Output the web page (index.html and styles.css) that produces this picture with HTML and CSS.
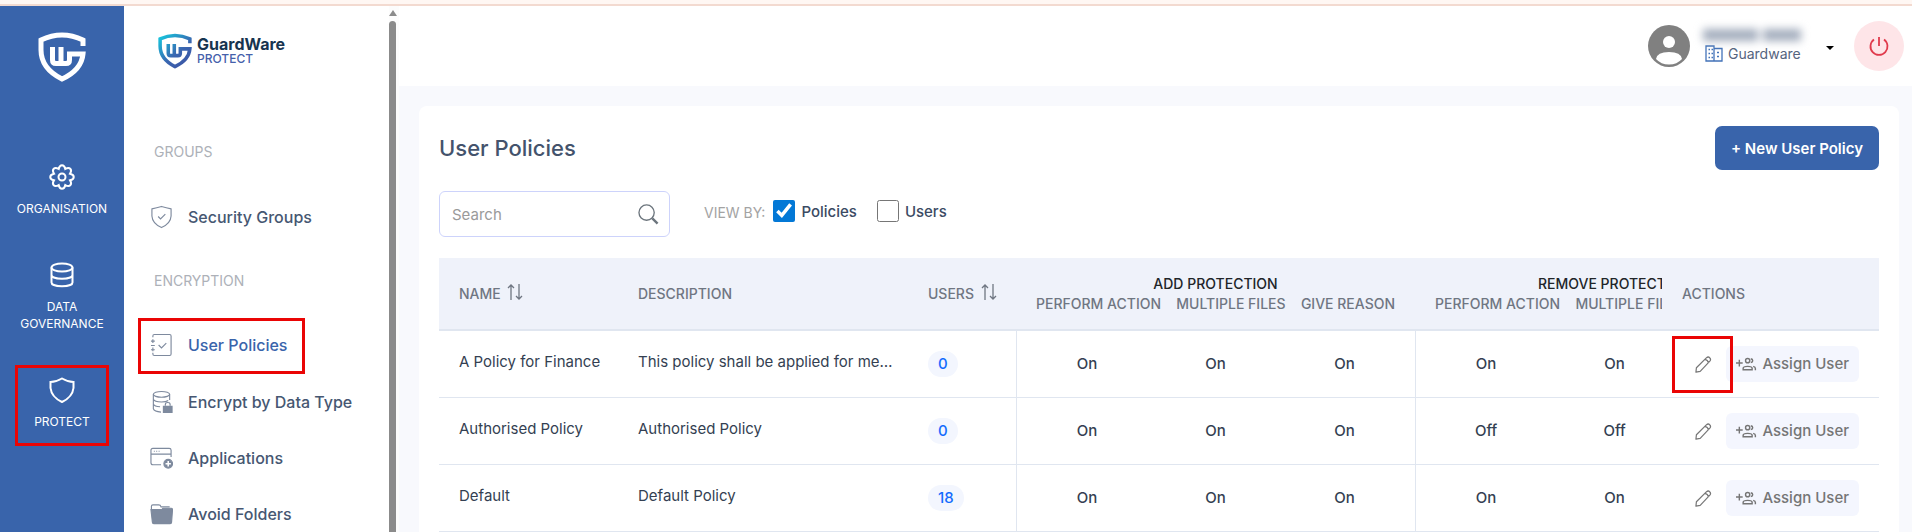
FILE: index.html
```html
<!DOCTYPE html>
<html lang="en">
<head>
    <meta charset="utf-8">
    <title>User Policies - GuardWare Protect</title>
    <link rel="stylesheet" href="styles.css">
</head>
<body>
    <!-- Shared icons -->
    <svg class="icon-defs" aria-hidden="true">
        <linearGradient id="logoFill" gradientUnits="userSpaceOnUse" x1="4" y1="4" x2="40" y2="46">
            <stop offset="0" stop-color="#17c3dc" />
            <stop offset="0.6" stop-color="#3a66b0" />
            <stop offset="1" stop-color="#3b55a5" />
        </linearGradient>
        <symbol id="logo" viewBox="0 0 48 50">
            <path d="M45 14V8Q24-2 3 8v10c0 14 9 23 21 29 13-6 20-14 21-25H31.500V28q0 3.500-3.500 3.500H18q-3.500 0-3.500-3.500V15M23 15v16" fill="none" stroke-width="5" />
        </symbol>
        <symbol id="sort" viewBox="0 0 16 18">
            <path d="M4 17V2M1 5l3-3 3 3M12 1v15M9 13l3 3 3-3" fill="none" stroke="currentColor" stroke-width="1.3" />
        </symbol>
        <symbol id="pencil" viewBox="0 0 18 18">
            <path d="M1 17l.5-4.500L12 2q2-1.800 3.500-.2 1.800 1.700.2 3.700L5.500 16.200zM10.500 3.500L14.500 7.500M12 9l-8 8" fill="none" stroke="none" />
            <path d="M1 17l.5-4.500L12 2q2-1.800 3.500-.2 1.800 1.700.2 3.700L5.500 16.200zM10.500 3.500q3 .5 3.800 3.800" fill="none" stroke="currentColor" stroke-width="1.300" stroke-linejoin="round" />
        </symbol>
        <symbol id="assign" viewBox="0 0 22 14">
            <path d="M0 6h7M3.500 2.500v7M7.500 13v-1.500q0-2 4.700-2t4.700 2V13zM15.500 1.500q2 .3 2 2t-2 2M18 9.500q2.300.6 2.300 2.300V13.500" fill="none" stroke="currentColor" stroke-width="1.500" />
            <circle cx="12.200" cy="3.500" r="2.200" fill="none" stroke="currentColor" stroke-width="1.500" />
        </symbol>
    </svg>

    <div class="top-strip"></div>

    <div class="app">
        <!-- Main modules -->
        <nav class="rail" aria-label="Modules">
            <svg class="rail-logo"><use href="#logo" /></svg>
            <a href="#" class="rail-item">
                <svg viewBox="-13 -13 26 26" class="rail-icon">
                    <path d="M-3.300-8C-2.200-13 2.200-13 3.300-8C7.600-10.700 10.700-7.600 8-3.300C13-2.200 13 2.200 8 3.300C10.700 7.600 7.600 10.700 3.300 8C2.200 13-2.200 13-3.300 8C-7.600 10.700-10.700 7.600-8 3.300C-13 2.200-13-2.200-8-3.300C-10.700-7.600-7.600-10.700-3.300-8z" />
                    <circle r="3.500" />
                </svg>
                ORGANISATION
            </a>
            <a href="#" class="rail-item">
                <svg viewBox="0 0 26 26" class="rail-icon">
                    <ellipse cx="13" cy="5.500" rx="10.500" ry="4" />
                    <path d="M2.500 5.500v15c0 5 21 5 21 0v-15M2.500 13c0 5 21 5 21 0" />
                </svg>
                DATA GOVERNANCE
            </a>
            <a href="#" class="rail-item rail-item-active">
                <svg viewBox="0 0 26 26" class="rail-icon">
                    <path d="M13 1.500Q19 5 24.500 5v6q-1 9-11.500 14Q2.500 20 1.500 11V5Q7 5 13 1.500z" />
                </svg>
                PROTECT
            </a>
        </nav>

        <!-- Protect menu -->
        <div class="menu">
            <a href="#" class="brand">
                <svg class="brand-mark"><use href="#logo" /></svg>
                <span class="brand-text">
                    <span class="brand-name">GuardWare</span>
                    <span class="brand-product">PROTECT</span>
                </span>
            </a>
            <h2 class="menu-title">GROUPS</h2>
            <a href="#" class="menu-item">
                <svg class="menu-icon" viewBox="0 0 24 24">
                    <path d="M12 1q5 1.500 10 2.500v7.500q-.5 8-10 12-9.500-4-10-12V3.500Q7 2.500 12 1zM8.500 11.500l2.500 2.500 5-5" />
                </svg>
                Security Groups
            </a>
            <h2 class="menu-title">ENCRYPTION</h2>
            <a href="#" class="menu-item menu-item-active">
                <svg class="menu-icon" viewBox="0 0 24 24">
                    <path d="M3 4V2.500Q3 1 4.500 1h16Q22 1 22 2.500v19q0 1.500-1.500 1.500h-16Q3 23 3 21.500V20M1 8h4M1 12.500h4M1 17h4M3 6v4M3 14.500v4M9 12l3 3 5-5" />
                </svg>
                User Policies
            </a>
            <a href="#" class="menu-item">
                <svg class="menu-icon" viewBox="0 0 24 24">
                    <ellipse cx="12" cy="4" rx="8.500" ry="3" />
                    <path d="M3.500 4v15q1 3 8 3.500M20.500 4v6M3.500 9q1 3 8.500 3 5 0 7-1.500M3.500 14q1 2.500 7 3" />
                    <path class="fill" d="M14 16.500h9V23h-9z" />
                    <path d="M16 16v-1.500q0-2 2.500-2t2.500 2V16" />
                </svg>
                Encrypt by Data Type
            </a>
            <a href="#" class="menu-item">
                <svg class="menu-icon" viewBox="0 0 24 24">
                    <path d="M11.500 19H3q-2 0-2-2V4q0-2 2-2h17q2 0 2 2v7M1 8h21M4 5h1M6.500 5h1M9 5h1" />
                    <circle class="fill" cx="19" cy="18" r="4.500" />
                    <path class="cut" d="M19 15.200v5.600M16.200 18h5.600" />
                </svg>
                Applications
            </a>
            <a href="#" class="menu-item">
                <svg class="menu-icon" viewBox="0 0 24 24">
                    <path class="fill" d="M1 7.500h10q1.500 0 2.500-1.500h8.500q1.500 0 1.500 1.500l-1 13q0 1.500-1.500 1.500h-17q-1.500 0-1.500-1.500z" />
                    <path d="M1.500 7V4q0-1.500 1.500-1.500h6q2 0 2.500 2h9" />
                </svg>
                Avoid Folders
            </a>
        </div>
        <div class="scrollbar"><div class="scroll-arrow"></div><div class="scroll-thumb"></div></div>

        <div class="content">
            <header class="header">
                <button type="button" class="account" aria-label="Account menu">
                    <svg class="avatar" viewBox="0 0 42 42">
                        <circle cx="21" cy="21" r="21" fill="#808080" />
                        <circle cx="21" cy="17" r="6" fill="#fff" />
                        <path d="M8 34q1-7 13-7t13 7q-5 5.500-13 5.500T8 34z" fill="#fff" />
                    </svg>
                    <span class="account-text">
                        <span class="account-name"><i></i><i></i></span>
                        <span class="account-org">
                            <svg class="org-icon" viewBox="0 0 18 17">
                                <path d="M1 1h8v15H1zM9 3.500h8V16H9zM3.500 4.500H5M3.500 8.500H5M3.500 12.500H5M6.500 4.500H8M6.500 8.500H8M6.500 12.500H8M12 7.500h2M12 11.500h2" />
                            </svg>
                            Guardware
                        </span>
                    </span>
                    <span class="caret"></span>
                </button>
                <button type="button" class="power" aria-label="Log out">
                    <svg viewBox="0 0 20 20">
                        <path d="M10 1v9M5 3.500a8.500 8.500 0 1 0 10 0" />
                    </svg>
                </button>
            </header>

            <main class="card">
                <div class="card-top">
                    <h1>User Policies</h1>
                    <button type="button" class="new-button">+ New User Policy</button>
                </div>

                <div class="filters">
                    <div class="search">
                        <input type="text" placeholder="Search" aria-label="Search">
                        <svg viewBox="0 0 22 22">
                            <circle cx="9" cy="9" r="8" />
                            <path d="M15 15l5.500 5.500" stroke-width="2.500" />
                        </svg>
                    </div>
                    <span class="view-by">VIEW BY:</span>
                    <label class="check"><input type="checkbox" checked> Policies</label>
                    <label class="check"><input type="checkbox"> Users</label>
                </div>

                <div class="table-wrap">
                    <table>
                        <colgroup>
                            <col class="col-name"><col class="col-desc"><col class="col-users">
                            <col class="col-edge"><col class="col-mid"><col class="col-edge">
                            <col class="col-edge"><col class="col-mid"><col class="col-edge">
                        </colgroup>
                        <thead>
                            <tr>
                                <th>NAME <svg class="sort"><use href="#sort" /></svg></th>
                                <th>DESCRIPTION</th>
                                <th>USERS <svg class="sort"><use href="#sort" /></svg></th>
                                <th colspan="3">
                                    <div class="group-title">ADD PROTECTION</div>
                                    <div class="group-cols"><span>PERFORM ACTION</span><span>MULTIPLE FILES</span><span>GIVE REASON</span></div>
                                </th>
                                <th colspan="3">
                                    <div class="group-title">REMOVE PROTECTION</div>
                                    <div class="group-cols"><span>PERFORM ACTION</span><span>MULTIPLE FILES</span><span>GIVE REASON</span></div>
                                </th>
                                <th class="actions">ACTIONS</th>
                            </tr>
                        </thead>
                        <tbody>
                            <tr>
                                <td>A Policy for Finance</td>
                                <td><div class="ellipsis">This policy shall be applied for members</div></td>
                                <td><a href="#" class="count">0</a></td>
                                <td class="state first">On</td><td class="state">On</td><td class="state last">On</td>
                                <td class="state first">On</td><td class="state">On</td><td class="state last">On</td>
                                <td class="actions">
                                    <div class="action-row">
                                        <button type="button" class="edit edit-marked" aria-label="Edit"><svg><use href="#pencil" /></svg></button>
                                        <button type="button" class="assign"><svg><use href="#assign" /></svg>Assign User</button>
                                    </div>
                                </td>
                            </tr>
                            <tr>
                                <td>Authorised Policy</td>
                                <td>Authorised Policy</td>
                                <td><a href="#" class="count">0</a></td>
                                <td class="state first">On</td><td class="state">On</td><td class="state last">On</td>
                                <td class="state first">Off</td><td class="state">Off</td><td class="state last">Off</td>
                                <td class="actions">
                                    <div class="action-row">
                                        <button type="button" class="edit" aria-label="Edit"><svg><use href="#pencil" /></svg></button>
                                        <button type="button" class="assign"><svg><use href="#assign" /></svg>Assign User</button>
                                    </div>
                                </td>
                            </tr>
                            <tr>
                                <td>Default</td>
                                <td>Default Policy</td>
                                <td><a href="#" class="count">18</a></td>
                                <td class="state first">On</td><td class="state">On</td><td class="state last">On</td>
                                <td class="state first">On</td><td class="state">On</td><td class="state last">On</td>
                                <td class="actions">
                                    <div class="action-row">
                                        <button type="button" class="edit" aria-label="Edit"><svg><use href="#pencil" /></svg></button>
                                        <button type="button" class="assign"><svg><use href="#assign" /></svg>Assign User</button>
                                    </div>
                                </td>
                            </tr>
                        </tbody>
                    </table>
                </div>
            </main>
        </div>
    </div>
</body>
</html>
```
FILE: styles.css
```css
* {
    box-sizing: border-box;
}

body {
    margin: 0;
    height: 100vh;
    display: flex;
    flex-direction: column;
    overflow: hidden;
    font-family: Inter, "Liberation Sans", sans-serif;
    font-size: 16px;
    color: #3b4a63;
    background: #f8f9fd;
}

a {
    color: inherit;
    text-decoration: none;
}

button {
    font: inherit;
    border: 0;
    cursor: pointer;
}

.icon-defs {
    position: absolute;
    width: 0;
    height: 0;
}

.top-strip {
    flex: none;
    height: 6px;
    background: #fff7f3;
    border-bottom: 2px solid #f3dad0;
}

.app {
    flex: 1;
    min-height: 0;
    display: flex;
}

/* Blue module rail */
.rail {
    flex: none;
    width: 124px;
    display: flex;
    flex-direction: column;
    align-items: center;
    background: #3964ab;
    color: white;
}

.rail-logo {
    flex: none;
    width: 48px;
    height: 50px;
    margin: 26px 0 70px;
    stroke: white;
}

.rail-item {
    display: flex;
    flex-direction: column;
    align-items: center;
    gap: 10px;
    width: 94px;
    padding: 12px 0;
    margin-bottom: 21px;
    font-size: 12px;
    line-height: 17px;
    text-align: center;
}

.rail-item-active {
    height: 81px;
    border: 3px solid #ea0505;
    padding: 9px 0;
}

.rail-icon {
    flex: none;
    width: 26px;
    height: 26px;
    fill: none;
    stroke: white;
    stroke-width: 2;
}

/* Protect menu */
.menu {
    flex: none;
    width: 265px;
    padding: 26px 14px 0;
    overflow: hidden;
    background: white;
}

.brand {
    display: flex;
    align-items: center;
    gap: 5px;
    height: 38px;
    padding-left: 20px;
}

.brand-mark {
    width: 34px;
    height: 36px;
    stroke: url(#logoFill);
}

.brand-text {
    display: flex;
    flex-direction: column;
}

.brand-name {
    font-size: 16px;
    line-height: 15px;
    font-weight: bold;
    color: #17344f;
}

.brand-product {
    font-size: 12px;
    line-height: 13px;
    font-weight: 500;
    color: #4560ab;
}

.menu-title {
    margin: 26px 0 27px 16px;
    font-size: 14px;
    line-height: 20px;
    font-weight: normal;
    color: #adb1b8;
}

.brand + .menu-title {
    margin-top: 72px;
}

.menu-item {
    display: flex;
    align-items: center;
    gap: 15px;
    height: 56px;
    padding-left: 12px;
    font-weight: 500;
    color: #465772;
}

.menu-item-active {
    width: 167px;
    border: 3px solid #ea0505;
    padding-left: 9px;
    padding-bottom: 3px;
    color: #3964ab;
}

.menu-icon {
    width: 23px;
    height: 24px;
    fill: none;
    stroke: #7e8a9e;
    stroke-width: 1.2;
}

.menu-icon .fill {
    fill: #7e8a9e;
}

.menu-icon .cut {
    stroke: white;
    stroke-width: 1.6;
}

.scrollbar {
    flex: none;
    display: flex;
    flex-direction: column;
    gap: 5px;
    width: 10px;
    padding-top: 4px;
    background: #fcfcfc;
}

.scroll-arrow {
    width: 8px;
    height: 6px;
    background: #8b8b8b;
    clip-path: polygon(50% 0, 100% 100%, 0 100%);
}

.scroll-thumb {
    flex: 1;
    width: 7px;
    border-radius: 4px 4px 0 0;
    background: #8b8b8b;
}

.content {
    flex: 1;
    min-width: 0;
    display: flex;
    flex-direction: column;
}

/* Header */
.header {
    flex: none;
    display: flex;
    justify-content: flex-end;
    align-items: center;
    gap: 20px;
    height: 80px;
    padding-right: 8px;
    background: white;
}

.account {
    display: flex;
    align-items: center;
    gap: 13px;
    padding: 0;
    background: none;
    color: #55647e;
}

.avatar {
    width: 42px;
    height: 42px;
}

.account-text {
    display: flex;
    flex-direction: column;
    gap: 3px;
    width: 98px;
}

.account-name {
    display: flex;
    gap: 5px;
    filter: blur(4px);
}

.account-name i {
    width: 55px;
    height: 12px;
    background: #a3adbd;
}

.account-name i + i {
    width: 38px;
}

.account-org {
    display: flex;
    align-items: center;
    gap: 5px;
    padding-left: 2px;
    font-size: 14px;
    line-height: 20px;
}

.org-icon {
    flex: none;
    width: 18px;
    height: 17px;
    fill: none;
    stroke: #4272b8;
    stroke-width: 1.3;
}

.caret {
    margin-left: 12px;
    margin-top: 4px;
    border: 4px solid transparent;
    border-top-color: black;
    border-bottom: 0;
}

.power {
    display: flex;
    align-items: center;
    justify-content: center;
    width: 50px;
    height: 50px;
    padding: 0;
    border-radius: 50%;
    background: #fee5e8;
}

.power svg {
    width: 20px;
    height: 20px;
    fill: none;
    stroke: #e03a4c;
    stroke-width: 1.8;
}

/* Policies card */
.card {
    flex: 1;
    min-height: 0;
    margin: 20px 13px 0 20px;
    padding: 20px 20px 0;
    border-radius: 8px 8px 0 0;
    overflow: hidden;
    background: white;
}

.card-top {
    display: flex;
    align-items: center;
    justify-content: space-between;
}

h1 {
    margin: 0;
    font-size: 22px;
    font-weight: 500;
    color: #44536c;
}

.new-button {
    height: 44px;
    padding: 0 16px;
    border-radius: 7px;
    background: #3964ab;
    color: white;
    font-size: 15px;
    font-weight: 600;
}

.filters {
    display: flex;
    align-items: center;
    margin: 21px 0;
}

.search {
    display: flex;
    align-items: center;
    width: 231px;
    height: 46px;
    padding: 0 10px 0 12px;
    border: 1px solid #cdd3fb;
    border-radius: 6px;
}

.search input {
    flex: 1;
    min-width: 0;
    padding: 0;
    border: 0;
    outline: none;
    font: inherit;
    font-size: 15px;
}

.search input::placeholder {
    color: #9a9a9a;
}

.search svg {
    width: 21px;
    height: 21px;
    fill: none;
    stroke: #6c757d;
    stroke-width: 1.4;
}

.view-by {
    margin: 0 8px 0 34px;
    padding-bottom: 4px;
    font-size: 14px;
    color: #a3a3a3;
}

.check {
    display: flex;
    align-items: center;
    gap: 6px;
    margin-right: 20px;
    padding-bottom: 6px;
    font-size: 15px;
    font-weight: 500;
}

.check input {
    width: 22px;
    height: 22px;
    margin: 0;
    accent-color: #0378d6;
}

/* Table, the actions column stays in view on the right */
.table-wrap {
    overflow: hidden;
}

table {
    width: 100%;
    min-width: 1592px;
    table-layout: fixed;
    border-collapse: separate;
    border-spacing: 0;
}

.col-name {
    width: 179px;
}

.col-desc {
    width: 290px;
}

.col-users {
    width: 108px;
}

.col-edge {
    width: 135px;
}

.col-mid {
    width: 129px;
}

th {
    height: 73px;
    padding: 0 20px;
    border-bottom: 2px solid #e0e6f0;
    background: #eff2fa;
    color: #6f7682;
    font-size: 14px;
    font-weight: 500;
    line-height: 20px;
    text-align: left;
    white-space: nowrap;
}

.sort {
    width: 16px;
    height: 18px;
    margin-left: 3px;
    vertical-align: -2px;
}

.group-title {
    color: #212529;
    text-align: center;
}

.group-cols {
    display: flex;
    justify-content: space-between;
}

td {
    height: 67px;
    padding: 0 20px;
    border-bottom: 1px solid #e0e6f0;
    font-size: 15px;
    line-height: 20px;
    color: #343f52;
    white-space: nowrap;
}

td:nth-child(-n+2) {
    padding-right: 12px;
    padding-bottom: 5px;
}

.ellipsis {
    max-width: 256px;
    overflow: hidden;
    text-overflow: ellipsis;
}

.count {
    display: inline-block;
    padding: 3px 10px;
    border-radius: 13px;
    background: #f3f6fe;
    color: #156cfd;
    font-weight: 500;
}

.state {
    padding: 0;
    text-align: center;
    font-weight: 500;
}

.state.first {
    padding-left: 6px;
    border-left: 1px solid #e0e6f0;
}

.state.last {
    padding-right: 6px;
}

.actions {
    position: sticky;
    right: 0;
    width: 217px;
}

td.actions {
    background: white;
}

.action-row {
    display: flex;
    align-items: center;
    justify-content: flex-end;
    gap: 14px;
}

.edit {
    display: flex;
    padding: 0;
    background: none;
    color: #777;
}

.edit svg {
    width: 17px;
    height: 17px;
}

/* Highlight frame around the edit button */
.edit-marked {
    position: relative;
}

.edit-marked::after {
    content: "";
    position: absolute;
    z-index: 1;
    inset: -20px -21px -20px -23px;
    border: 3px solid #ea0505;
}

.assign {
    display: flex;
    align-items: center;
    gap: 5px;
    height: 36px;
    padding: 0 10px;
    border-radius: 6px;
    background: #f4f6fe;
    color: #757575;
    font-size: 15px;
    font-weight: 500;
}

.assign svg {
    width: 21px;
    height: 14px;
}
```
